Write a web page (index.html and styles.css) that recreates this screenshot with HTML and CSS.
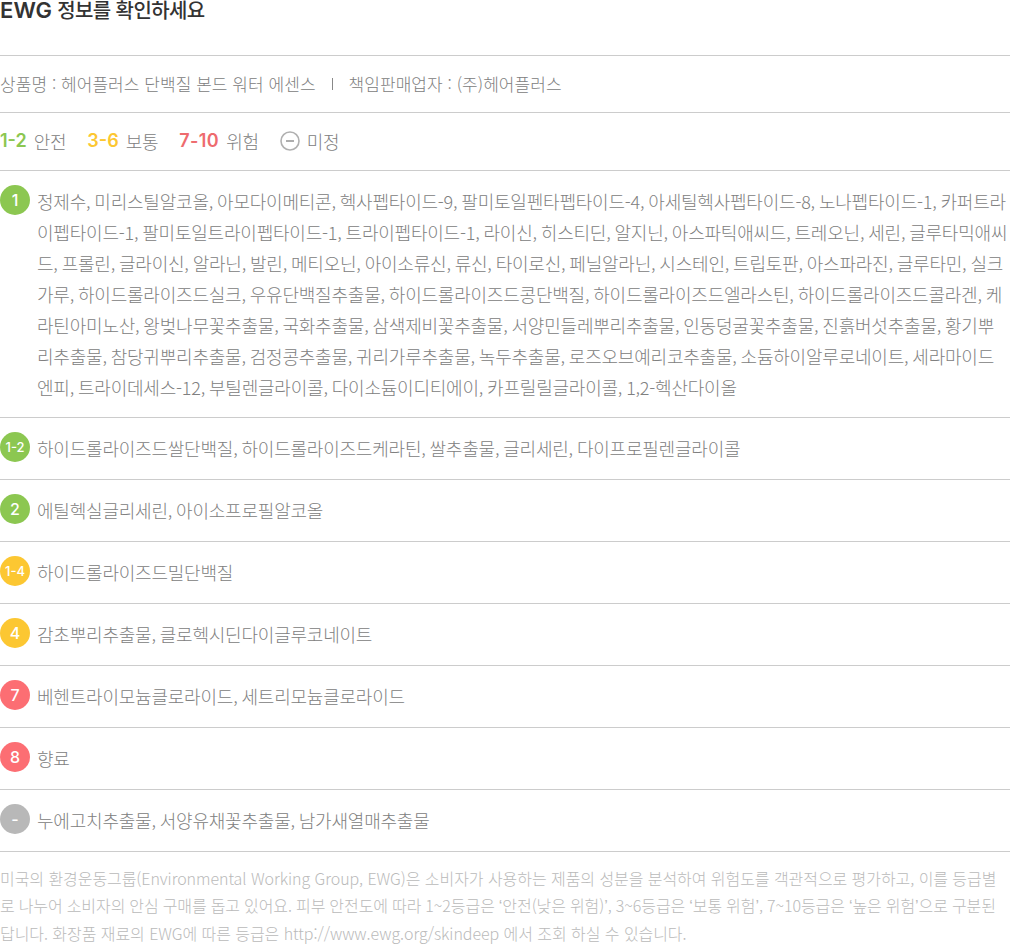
FILE: index.html
```html
<!DOCTYPE html>
<html lang="ko">
<head>
<meta charset="utf-8">
<title>EWG 정보를 확인하세요</title>
<link rel="stylesheet" href="styles.css">
</head>
<body>
<div class="page">
  <h1 class="title"><span class="latin">EWG</span> 정보를 확인하세요</h1>
  <p class="meta"><span>상품명 : 헤어플러스 단백질 본드 워터 에센스</span><span class="sep"></span><span>책임판매업자 : (주)헤어플러스</span></p>
  <div class="legend">
    <span class="item"><b class="num green">1-2</b>안전</span>
    <span class="item"><b class="num yellow">3-6</b>보통</span>
    <span class="item"><b class="num red">7-10</b>위험</span>
    <span class="item"><svg class="minus" width="20" height="20" viewBox="0 0 20 20"><circle cx="10" cy="10" r="9" fill="none" stroke="#b0b0b0" stroke-width="1.6"/><path d="M6 10h8" stroke="#999" stroke-width="1.6"/></svg>미정</span>
  </div>
  <ul class="list">
    <li class="row"><span class="badge green-bg">1</span><p class="text">정제수, 미리스틸알코올, 아모다이메티콘, 헥사펩타이드-9, 팔미토일펜타펩타이드-4, 아세틸헥사펩타이드-8, 노나펩타이드-1, 카퍼트라이펩타이드-1, 팔미토일트라이펩타이드-1, 트라이펩타이드-1, 라이신, 히스티딘, 알지닌, 아스파틱애씨드, 트레오닌, 세린, 글루타믹애씨드, 프롤린, 글라이신, 알라닌, 발린, 메티오닌, 아이소류신, 류신, 타이로신, 페닐알라닌, 시스테인, 트립토판, 아스파라진, 글루타민, 실크가루, 하이드롤라이즈드실크, 우유단백질추출물, 하이드롤라이즈드콩단백질, 하이드롤라이즈드엘라스틴, 하이드롤라이즈드콜라겐, 케라틴아미노산, 왕벚나무꽃추출물, 국화추출물, 삼색제비꽃추출물, 서양민들레뿌리추출물, 인동덩굴꽃추출물, 진흙버섯추출물, 황기뿌리추출물, 참당귀뿌리추출물, 검정콩추출물, 귀리가루추출물, 녹두추출물, 로즈오브예리코추출물, 소듐하이알루로네이트, 세라마이드엔피, 트라이데세스-12, 부틸렌글라이콜, 다이소듐이디티에이, 카프릴릴글라이콜, 1,2-헥산다이올</p></li>
    <li class="row"><span class="badge small green-bg">1-2</span><p class="text">하이드롤라이즈드쌀단백질, 하이드롤라이즈드케라틴, 쌀추출물, 글리세린, 다이프로필렌글라이콜</p></li>
    <li class="row"><span class="badge green-bg">2</span><p class="text">에틸헥실글리세린, 아이소프로필알코올</p></li>
    <li class="row"><span class="badge small yellow-bg">1-4</span><p class="text">하이드롤라이즈드밀단백질</p></li>
    <li class="row"><span class="badge yellow-bg">4</span><p class="text">감초뿌리추출물, 클로헥시딘다이글루코네이트</p></li>
    <li class="row"><span class="badge red-bg">7</span><p class="text">베헨트라이모늄클로라이드, 세트리모늄클로라이드</p></li>
    <li class="row"><span class="badge red-bg">8</span><p class="text">향료</p></li>
    <li class="row"><span class="badge gray-bg">-</span><p class="text">누에고치추출물, 서양유채꽃추출물, 남가새열매추출물</p></li>
  </ul>
  <div class="note">
    <p class="line">미국의 환경운동그룹(Environmental Working Group, EWG)은 소비자가 사용하는 제품의 성분을 분석하여 위험도를 객관적으로 평가하고, 이를 등급별</p>
    <p class="line tight">로 나누어 소비자의 안심 구매를 돕고 있어요. 피부 안전도에 따라 1~2등급은 <span class="q">‘</span>안전(낮은 위험)<span class="q">’</span>, 3~6등급은 <span class="q">‘</span>보통 위험<span class="q">’</span>, 7~10등급은 <span class="q">‘</span>높은 위험<span class="q">’</span>으로 구분된</p>
    <p class="line">답니다. 화장품 재료의 EWG에 따른 등급은 http://www.ewg.org/skindeep 에서 조회 하실 수 있습니다.</p>
  </div>
</div>
</body>
</html>
```
FILE: styles.css
```css
* { box-sizing: border-box; }
html, body { margin: 0; padding: 0; background: #fff; }
body { font-family: "Noto Sans CJK KR", "Noto Sans", sans-serif; color: #808080; font-weight: 300; font-size: 18px; letter-spacing: -0.215px; word-spacing: -0.83px; overflow: hidden; }
.page { width: 1010px; height: 945px; overflow: hidden; }
.title { margin: 0; height: 56px; font-size: 20px; font-weight: 500; line-height: 20px; color: #333; border-bottom: 1px solid #ccc; letter-spacing: -0.6px; word-spacing: 0; }
.latin { font-family: "Inter", sans-serif; font-size: 22px; font-weight: 600; letter-spacing: 0.1px; }
.meta { margin: 0; height: 57px; padding-bottom: 2px; display: flex; align-items: center; font-size: 17px; letter-spacing: 0.05px; word-spacing: 0; border-bottom: 1px solid #ccc; }
.sep { width: 1px; height: 12px; background: #888; margin: 2px 16px 0 16px; }
.legend { height: 58px; padding-bottom: 2px; display: flex; align-items: center; gap: 21px; border-bottom: 1px solid #ccc; letter-spacing: -0.27px; word-spacing: 0; }
.item { display: flex; align-items: center; gap: 7px; }
.num { font-family: "Inter", sans-serif; font-weight: 600; font-size: 18px; letter-spacing: 0; }
.green { color: #8cc751; }
.yellow { color: #fcc732; }
.red { color: #ee6b6e; letter-spacing: 0.4px; }
.list { margin: 0; padding: 0; list-style: none; }
.row { display: flex; align-items: flex-start; gap: 7px; min-height: 62px; padding: 14px 0; border-bottom: 1px solid #ccc; }
.text { margin: 0; padding-top: 1px; flex: 1; line-height: 31px; word-break: break-all; }
.badge { flex: none; width: 30px; height: 30px; border-radius: 50%; color: #fff; display: flex; align-items: center; justify-content: center; font-family: "Inter", sans-serif; font-weight: 500; font-size: 16px; letter-spacing: 0; }
.badge.small { font-size: 13px; }
.green-bg { background: #8cc751; }
.yellow-bg { background: #fcc732; }
.red-bg { background: #fc6e73; }
.gray-bg { background: #b8b8b8; }
.note { margin: 13px 0 0; font-size: 16px; letter-spacing: -0.06px; word-spacing: 0; line-height: 27px; color: #bababa; }
.line { margin: 0; white-space: nowrap; }
.tight { word-spacing: -0.4px; }
.q { font-family: "Liberation Sans", sans-serif; }
```
